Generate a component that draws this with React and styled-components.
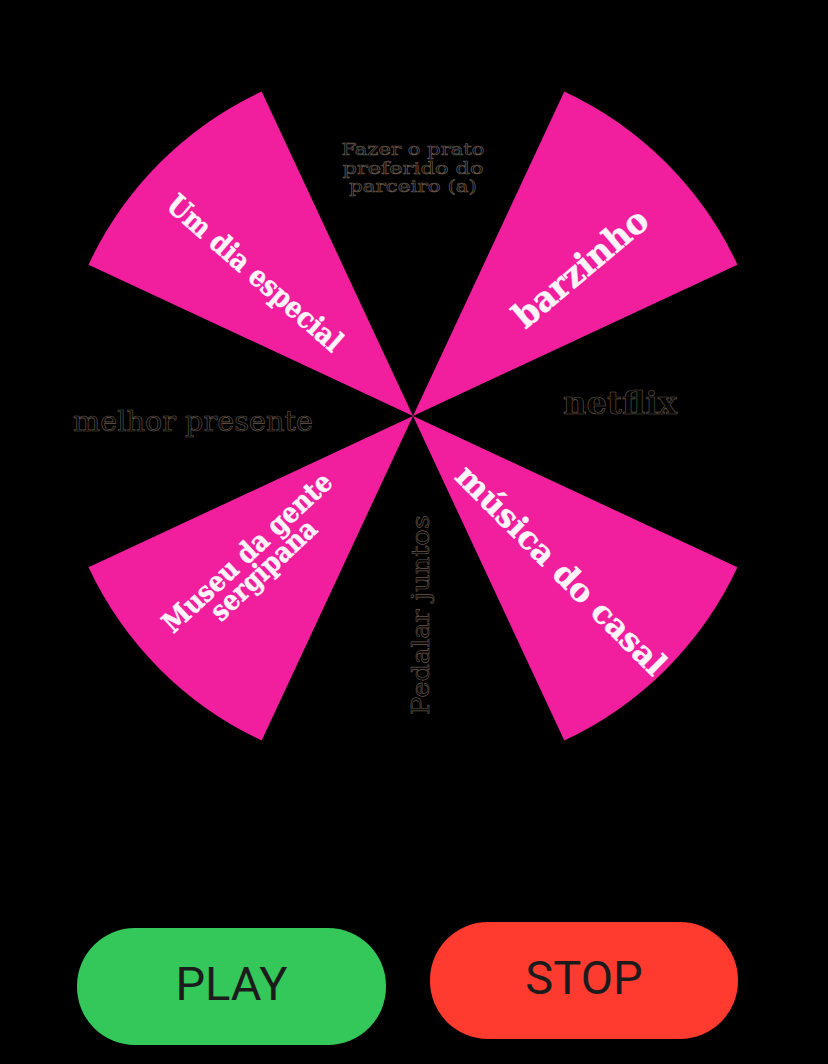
import React from "react";
import styled, { createGlobalStyle } from "styled-components";

const GlobalStyle = createGlobalStyle`
  html, body {
    margin: 0;
    padding: 0;
    background: #000;
  }
`;

const CX = 413;
const CY = 416;
const R = 358;

// pink slices, angles measured clockwise from the top
const slices = [
  [-65, -25],
  [25, 65],
  [115, 155],
  [205, 245],
];

const pt = (deg) => {
  const a = (deg * Math.PI) / 180;
  return [CX + R * Math.sin(a), CY - R * Math.cos(a)];
};

const slicePath = ([a1, a2]) => {
  const [x1, y1] = pt(a1);
  const [x2, y2] = pt(a2);
  return `M${CX} ${CY} L${x1} ${y1} A${R} ${R} 0 0 1 ${x2} ${y2} Z`;
};

const labels = [
  { lines: ["Um dia especial"], x: 255, y: 273, rot: 41, size: 29, len: 222, light: true },
  { lines: ["barzinho"], x: 580, y: 267, rot: -40, size: 35, len: 164, light: true },
  { lines: ["música do casal"], x: 561, y: 570, rot: 45, size: 32, len: 282, light: true },
  { lines: ["Museu da gente", "sergipana"], x: 247, y: 552, rot: -43, size: 28, len: [220, 134], light: true },
  { lines: ["melhor presente"], x: 193, y: 421, rot: 0, size: 27, len: 240 },
  { lines: ["netflix"], x: 620, y: 403, rot: 0, size: 32, len: 114, bold: true },
  { lines: ["Pedalar juntos"], x: 420, y: 615, rot: -90, size: 25, len: 200 },
];

const Screen = styled.div`
  width: 828px;
  height: 1064px;
  background: #000;
  display: flex;
  flex-direction: column;
  overflow: hidden;
`;

const WheelArea = styled.div`
  height: 840px;
`;

const Slice = styled.path`
  fill: #f11e9e;
`;

const Label = styled.text`
  font-family: "DejaVu Serif", "Liberation Serif", serif;
  font-size: ${(p) => p.$size}px;
  font-weight: ${(p) => (p.$light || p.$bold ? 700 : 400)};
  fill: ${(p) => (p.$light ? "#fff4fa" : "#050505")};
  stroke: ${(p) => (p.$light ? "#fff4fa" : "rgba(140, 120, 105, 0.75)")};
  stroke-width: ${(p) => (p.$light ? 0.5 : 0.6)}px;
`;

const ButtonRow = styled.div`
  display: flex;
  align-items: flex-start;
  gap: 44px;
  padding: 82px 0 0 77px;
`;

const Button = styled.button`
  width: ${(p) => p.$w}px;
  height: 117px;
  margin-top: ${(p) => p.$shift}px;
  border: none;
  border-radius: 58px;
  background: ${(p) => p.$bg};
  color: #1b1b1b;
  font-family: Roboto, "Liberation Sans", sans-serif;
  font-size: 47px;
  font-weight: 400;
  display: flex;
  align-items: center;
  justify-content: center;
  padding: 0 0 6px;
  cursor: pointer;
`;

const Wheel = () => (
  <WheelArea>
    <svg width="828" height="840" viewBox="0 0 828 840">
      {slices.map((s, i) => (
        <Slice key={i} d={slicePath(s)} />
      ))}
      {labels.map((l, i) => (
        <Label
          key={i}
          $size={l.size}
          $light={l.light}
          $bold={l.bold}
          textAnchor="middle"
          dominantBaseline="central"
          transform={`translate(${l.x} ${l.y}) rotate(${l.rot})`}
        >
          {l.lines.map((line, j) => (
            <tspan
              key={j}
              x="0"
              dy={j === 0 ? 0 : l.size * 0.85}
              textLength={Array.isArray(l.len) ? l.len[j] : l.len}
              lengthAdjust="spacingAndGlyphs"
            >
              {line}
            </tspan>
          ))}
        </Label>
      ))}
      <Label $size={16} textAnchor="middle" x="413" y="155">
        <tspan x="413" textLength="143" lengthAdjust="spacingAndGlyphs">Fazer o prato</tspan>
        <tspan x="413" dy="18.5" textLength="141" lengthAdjust="spacingAndGlyphs">preferido do</tspan>
        <tspan x="413" dy="18.5" textLength="128" lengthAdjust="spacingAndGlyphs">parceiro (a)</tspan>
      </Label>
    </svg>
  </WheelArea>
);

const App = () => {
  return (
    <Screen>
      <GlobalStyle />
      <Wheel />
      <ButtonRow>
        <Button $bg="#34c759" $w={309} $shift={6}>
          PLAY
        </Button>
        <Button $bg="#ff3b30" $w={308} $shift={0}>
          STOP
        </Button>
      </ButtonRow>
    </Screen>
  );
};

export default App;
